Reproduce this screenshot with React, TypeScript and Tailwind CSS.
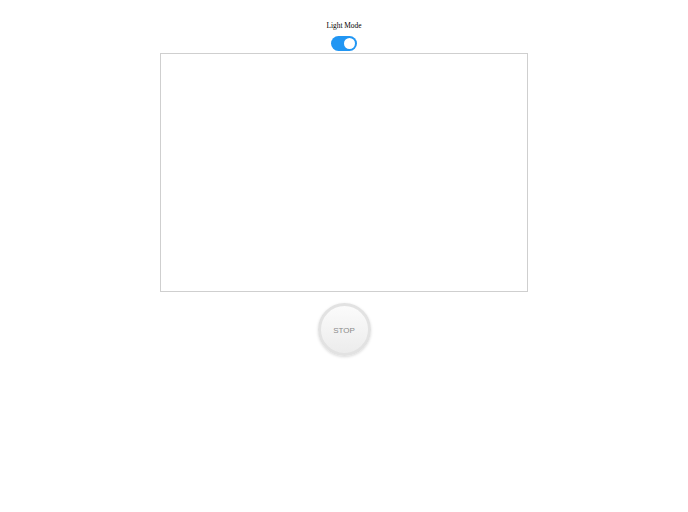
export default function App() {
  return (
    <div className="flex min-h-[512px] flex-col items-center bg-white pt-[21px]">
      <p className="text-[7.4px] leading-[10px] text-black" style={{ fontFamily: '"Liberation Serif", serif' }}>
        Light Mode
      </p>
      <div className="mt-[5px] flex h-[15px] w-[26px] items-center justify-end rounded-full bg-[#2196f3] px-[2px]">
        <div className="h-[11px] w-[11px] rounded-full bg-white" />
      </div>
      <div className="mt-[2px] h-[239px] w-[368px] border border-[#cfcfcf] bg-white" />
      <button
        className="mt-[11px] flex h-[53px] w-[53px] items-center justify-center rounded-full border-[3px] border-[#e2e2e2] bg-gradient-to-b from-[#fbfbfb] to-[#ececec] pt-[2px] text-[8px] text-[#8a8a8a] shadow-[0_1px_3px_rgba(0,0,0,0.15)]"
        style={{ fontFamily: '"Liberation Sans", Arial, sans-serif' }}
      >
        STOP
      </button>
    </div>
  );
}
